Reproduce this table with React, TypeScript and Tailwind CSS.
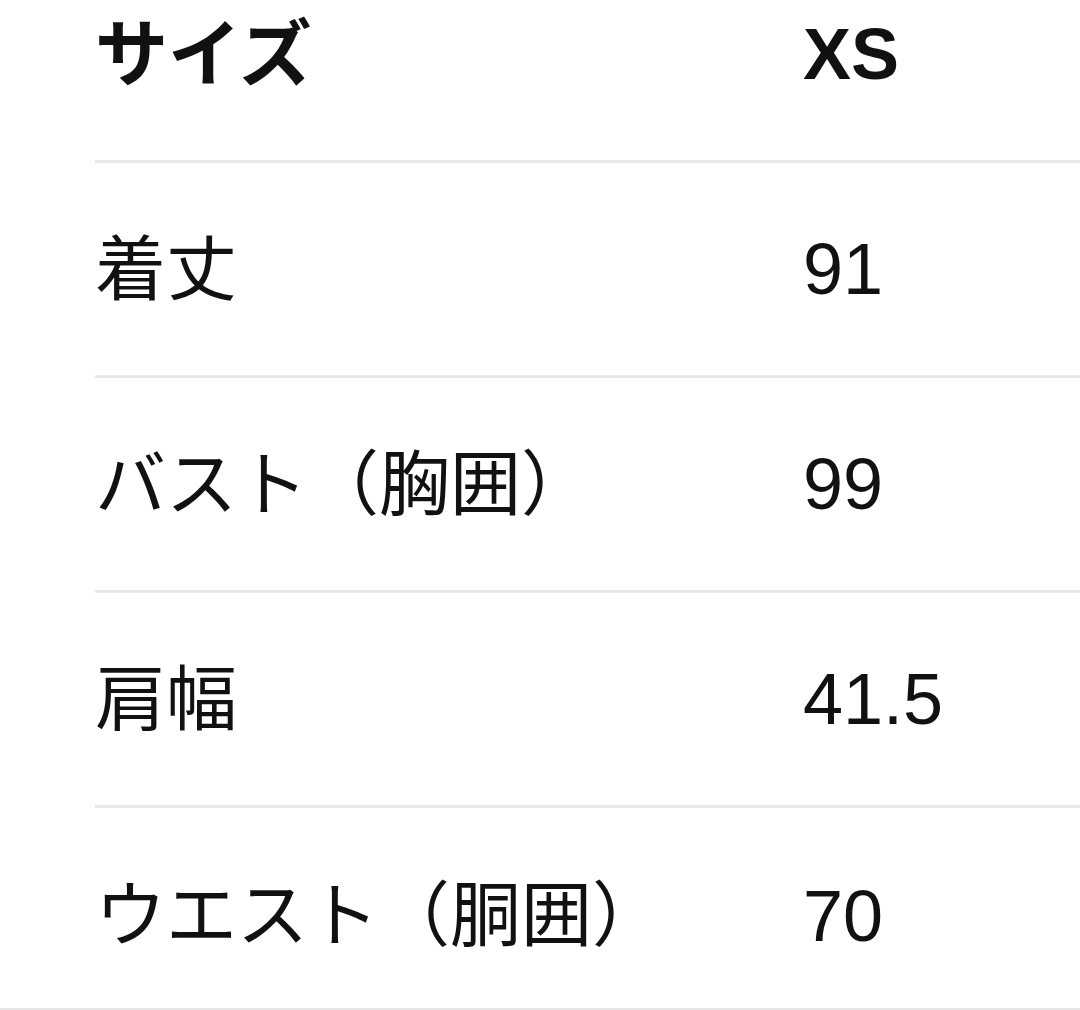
import React from "react"

type SizeRow = {
  label: string
  value: string
  bold?: boolean
}

const rows: SizeRow[] = [
  { label: "サイズ", value: "XS", bold: true },
  { label: "着丈", value: "91" },
  { label: "バスト（胸囲）", value: "99" },
  { label: "肩幅", value: "41.5" },
  { label: "ウエスト（胴囲）", value: "70" },
]

const font = {
  fontFamily: '"Liberation Sans", "Noto Sans CJK JP", sans-serif',
}

export default function App() {
  return (
    <div
      className="w-[1080px] h-[1010px] overflow-hidden bg-white text-[#111111] border-b-2 border-[#e6e6e6]"
      style={font}
    >
      <div className="-mt-[52px] ml-[95px]">
        {rows.map((row, i) => (
          <div
            key={row.label}
            className={
              "flex items-center h-[215px] " +
              (i < rows.length - 1 ? "border-b-[3px] border-[#e8e8e8]" : "")
            }
          >
            <div
              className={
                "w-[708px] leading-none " +
                (row.bold ? "text-[73px] font-bold" : "text-[71px] font-normal")
              }
            >
              {row.label}
            </div>
            <div
              className={
                "text-[72px] leading-none " +
                (row.bold ? "font-bold" : "font-normal")
              }
            >
              {row.value}
            </div>
          </div>
        ))}
      </div>
    </div>
  )
}
